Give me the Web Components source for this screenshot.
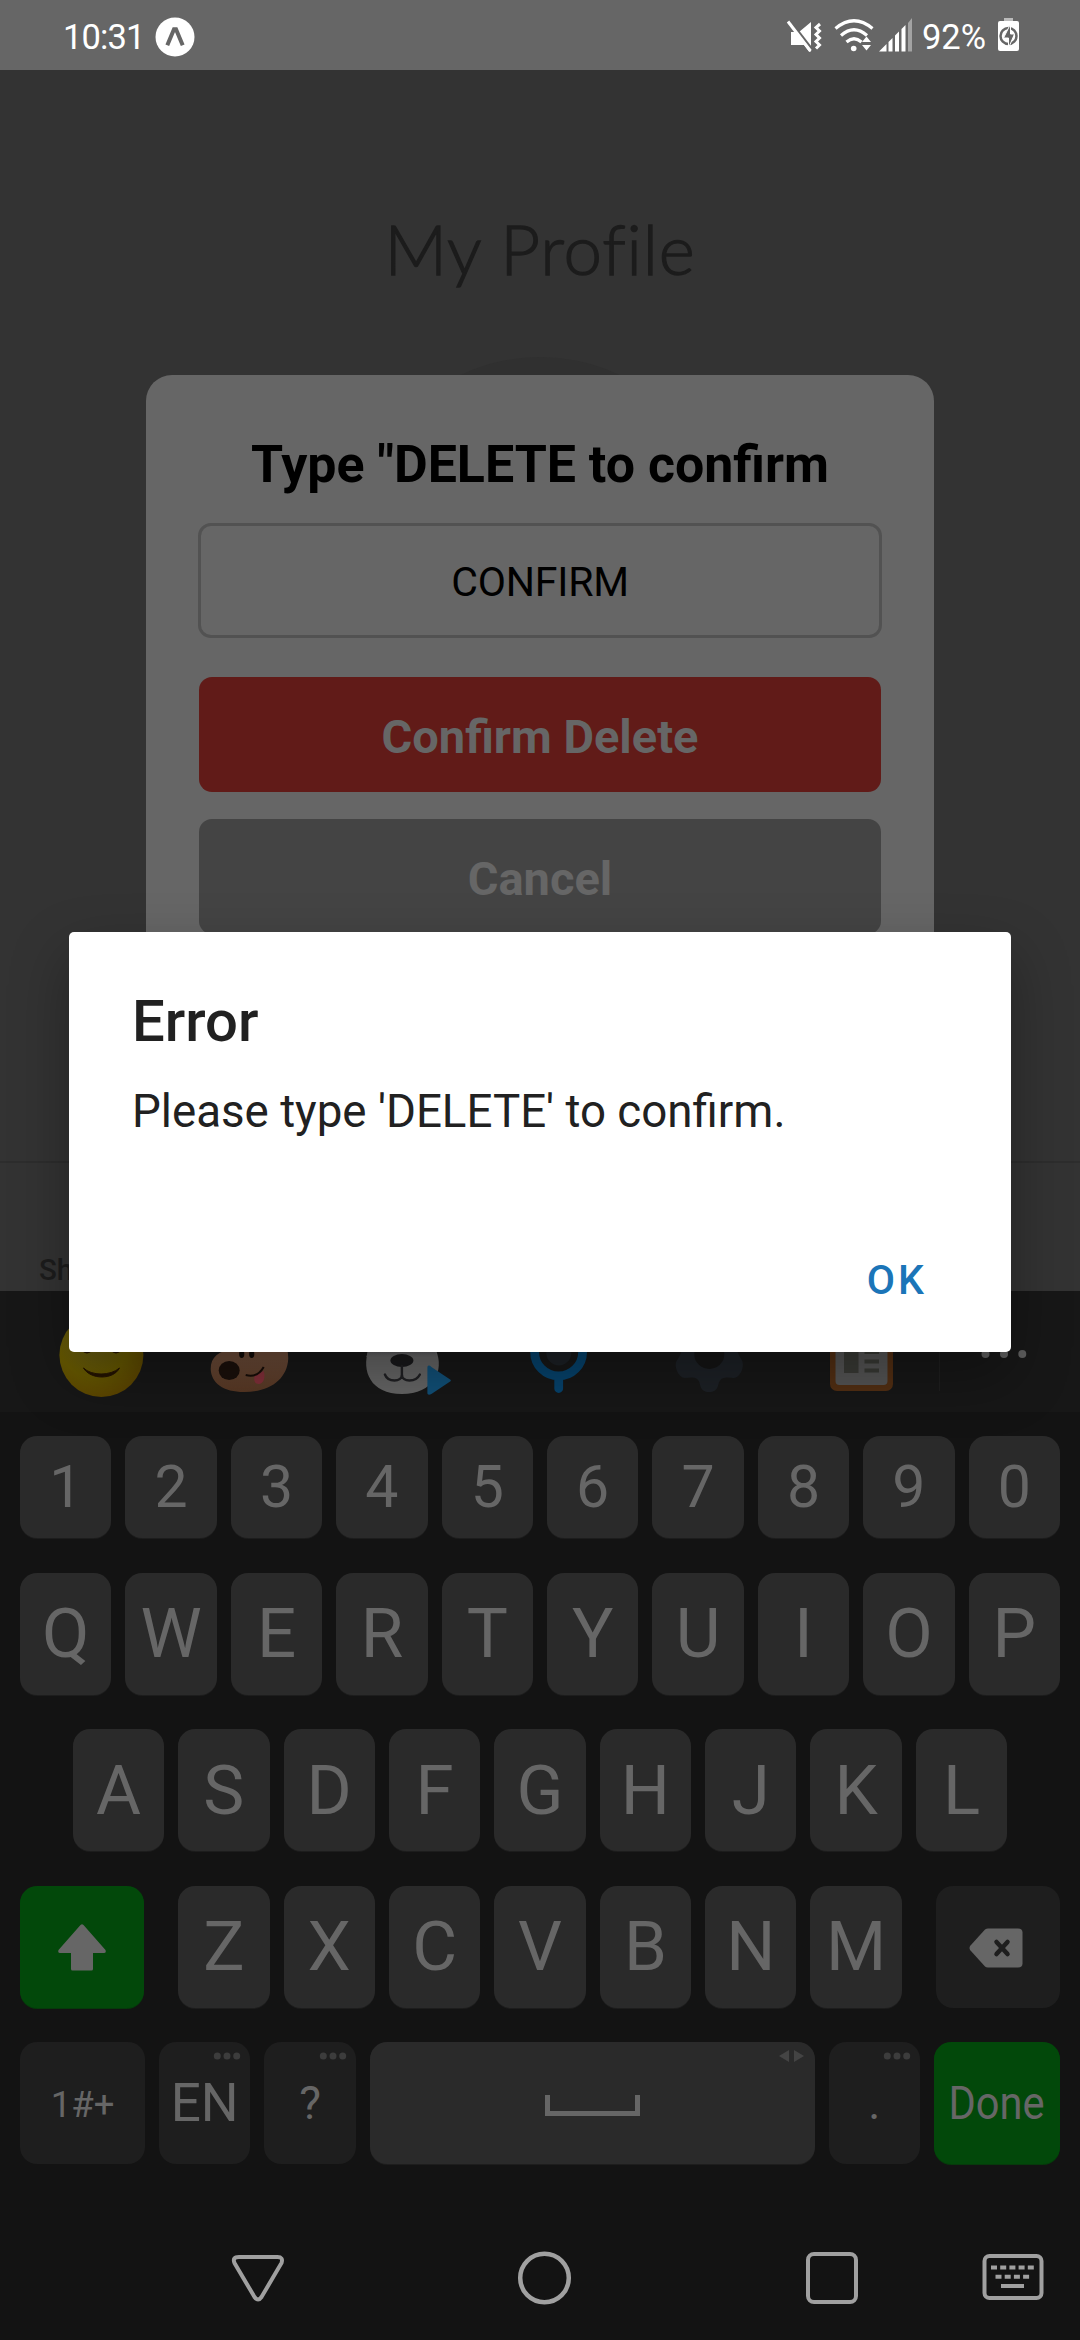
<!DOCTYPE html>
<html lang="en">
<head>
<meta charset="utf-8">
<title>My Profile</title>
<style>
  html, body { margin: 0; background: #131313; }
  body { font-family: Roboto, "Liberation Sans", sans-serif; width: 1080px; height: 2340px; overflow: hidden; }
</style>
</head>
<body>
<phone-screen></phone-screen>
<script>
const define = (name, html, render) => customElements.define(name, class extends HTMLElement {
  constructor() {
    super();
    const root = this.attachShadow({ mode: "open" });
    root.innerHTML = html;
    if (render) render.call(this, root);
  }
});

define("status-bar", `
<style>
  :host { display: flex; box-sizing: border-box; height: 70px; flex: none; background: #666; color: #fff; padding: 3px 60px 0 63px; align-items: center; justify-content: space-between; font-size: 34.5px; }
  div { display: flex; align-items: center; }
  svg { display: block; }
  .time { letter-spacing: -.9px; }
  .app { margin-left: 11px; }
</style>
<div><span class="time">10:31</span>
  <svg class="app" width="40" height="40" viewBox="0 0 40 40"><circle cx="20" cy="20" r="19.5" fill="#fff"/><path d="M12.3 28.3 19 12.2h2L27.700 28.300" fill="none" stroke="#666" stroke-width="4"/></svg>
</div>
<div>
  <svg width="136" height="40" viewBox="0 0 136 40" fill="#fff">
    <path d="M5 15h8L25 5v29.500h-2L18 28H5z"/><path d="M5 5 27 33.500" stroke="#666" stroke-width="2.600"/><path d="M2 4.500 24.500 34" stroke="#fff" stroke-width="3"/>
    <path d="m34 7-4 3.500 3.500 3.500-3.500 3.500 3.500 3.500-3.500 3.500 3.500 3.500-3.500 3.500" fill="none" stroke="#fff" stroke-width="3"/>
    <g fill="none" stroke="#fff" stroke-width="3.200"><path d="M49.500 11.500Q68-4 86.500 11.500"/><path d="M55 18.500Q68 7 81 18.500"/><path d="M60.500 25Q68 18.500 75.500 25"/></g>
    <circle cx="67.700" cy="31.500" r="2.800"/><path d="m76 25 4.500-5.500L85 25zM76 28h9l-4.500 5.500z"/>
    <path d="M93 34.500 100.500 27v7.500zM102.500 25l4-4v13.500h-4zM109 18.500l4-4v20h-4zM115.500 12l4-4v26.500h-4z"/><path d="m122 6 4-5v33.500h-4z" opacity=".4"/>
  </svg>
  <span>92%</span>
  <svg style="margin-left:11px" width="23" height="40" viewBox="0 0 23 40"><path d="M7 1h9v3H7z" fill="#bbb"/><rect x="1" y="4" width="21" height="30" rx="2" fill="#fff"/><circle cx="11.500" cy="19" r="8" fill="none" stroke="#666" stroke-width="2.500"/><path d="M13.500 7v10h4l-6 14V21h-5z" fill="#666" stroke="#fff" stroke-width="1"/></svg>
</div>`);

define("form-button", `
<style>
  :host { display: flex; box-sizing: border-box; height: 115px; border-radius: 13px; align-items: center; justify-content: center; background: var(--fill); color: #666; font-size: 47px; font-weight: 700; padding-top: 3px; }
</style><slot></slot>`);

define("confirm-card", `
<style>
  :host { display: flex; flex-direction: column; box-sizing: border-box; width: 788px; height: 611px; background: #666; border-radius: 26px; padding: 59px 53px 0; }
  h2 { margin: 0 0 28px; font-size: 51.900px; line-height: 61px; font-weight: 700; text-align: center; color: #000; white-space: nowrap; }
  .field { box-sizing: border-box; height: 115px; margin: 0 -1px; border: 3px solid #525252; border-radius: 13px; display: flex; align-items: center; justify-content: center; font-size: 41px; padding-top: 2px; letter-spacing: -.2px; color: #000; margin-bottom: 39px; }
  form-button + form-button { margin-top: 27px; }
</style>
<h2>Type "DELETE to confirm</h2>
<div class="field">CONFIRM</div>
<form-button style="--fill:#611b18">Confirm Delete</form-button>
<form-button style="--fill:#444">Cancel</form-button>`);

define("profile-page", `
<style>
  :host { display: flex; flex-direction: column; height: 1221px; flex: none; background: #333; overflow: hidden; position: relative; }
  h1 { margin: 134px 0 0; text-align: center; font: 300 69px/90px Lato, "Open Sans", sans-serif; letter-spacing: .8px; color: #1c1c1c; -webkit-text-stroke: 1.300px #1c1c1c; }
  .avatar { width: 368px; height: 368px; border-radius: 50%; background: #303030; margin: 63px auto 0; flex: none; }
  .tabs { margin-top: auto; height: 130px; flex: none; box-sizing: border-box; border-top: 2px solid #2d2d2d; padding: 89px 0 0 39px; font-size: 29.500px; font-weight: 500; line-height: 36px; color: #1c1c1c; }
  confirm-card { position: absolute; left: 146px; top: 305px; }
</style>
<h1>My Profile</h1>
<div class="avatar"></div>
<div class="tabs">Sh</div>
<confirm-card></confirm-card>`);

define("error-dialog", `
<style>
  :host { display: flex; flex-direction: column; box-sizing: border-box; width: 942px; height: 420px; background: #fff; border-radius: 5px; padding: 53px 87px 0 63px; box-shadow: 0 24px 60px rgba(0,0,0,.32); color: #212121; }
  h3 { margin: 0; font-size: 58px; line-height: 72px; font-weight: 500; }
  p { margin: 27px 0 0; font-size: 45.700px; line-height: 56px; white-space: nowrap; }
  button { align-self: flex-end; margin: 112px 0 0; padding: 0; border: 0; background: none; font: 500 41px/56px Roboto, sans-serif; letter-spacing: 3px; margin-right: -3px; color: #1b75b8; }
</style>
<h3>Error</h3>
<p>Please type 'DELETE' to confirm.</p>
<button>OK</button>`);

define("keyboard-toolbar", `
<style>
  :host { display: flex; height: 121px; flex: none; background: #171717; padding-left: 25px; }
  svg { display: block; width: 152.300px; height: 121px; flex: none; overflow: visible; }
  .more { width: 141px; border-left: 1px solid #1f1f1f; height: 100px; }
</style>
<svg viewBox="25 1291 152.300 121"><defs><radialGradient id="y" cx=".4" cy=".3" r=".75"><stop offset="0" stop-color="#635a18"/><stop offset=".6" stop-color="#665800"/><stop offset="1" stop-color="#5b4300"/></radialGradient></defs>
  <circle cx="101.400" cy="1355" r="42" fill="url(#y)"/><path d="M83.500 1368c8 8 27 8 36 0-6 12-29 12-36 0z" fill="#241300" stroke="#241300"/><path d="M83 1350q4 4 8 0M112 1350q4 4 8 0" stroke="#241300" stroke-width="3" fill="none"/></svg>
<svg viewBox="177.300 1291 152.300 121"><defs><linearGradient id="p" x2="0" y2="1"><stop offset=".5" stop-color="#6b4b38"/><stop offset="1" stop-color="#583824"/></linearGradient></defs>
  <path d="M211 1369c0-12 8-18 22-20l38-24c11 6 18 21 17.500 34-1 20-18 33-44 33-21 0-33-9-33.500-23z" fill="url(#p)"/><ellipse cx="229.500" cy="1370.500" rx="10.500" ry="9.500" fill="#1b100b"/><ellipse cx="242" cy="1354" rx="2.600" ry="4" fill="#110b08"/><ellipse cx="252" cy="1354" rx="2.600" ry="4" fill="#110b08"/><path d="M255 1375l9-4c2 6 0 13-5 13s-5-5-4-9z" fill="#83303a"/><path d="M246 1375q12 3 18-8" stroke="#170d08" stroke-width="2" fill="none"/></svg>
<svg viewBox="329.600 1291 152.300 121"><defs><linearGradient id="d" x2="0" y2="1"><stop offset=".6" stop-color="#5b5b5d"/><stop offset="1" stop-color="#666"/></linearGradient></defs>
  <path d="M368 1350c-7 21 2 44 33.500 44s43-23 34-44c-5-33-60-33-67.500 0z" fill="#666"/><path d="M369 1345h65l2 12h-70z" fill="url(#d)"/><ellipse cx="401.500" cy="1360.500" rx="11.500" ry="6.500" fill="#19191b"/><path d="M401.500 1366v8.500c0 8-14 8-17 0M401.500 1374.500c0 8 14 8 18 0" fill="none" stroke="#202023" stroke-width="2.400" stroke-linecap="round"/><path d="M427 1368c0-3 2-3 4-1l18 12c2 1 2 2 0 3l-18 12c-2 1-4 1-4-1z" fill="#115078"/></svg>
<svg viewBox="481.900 1291 152.300 121"><circle cx="558.700" cy="1353" r="12.500" fill="#1d2126"/><path d="M534.500 1352a24 24 0 0 0 48 0V1345M534.500 1352v-7M558.600 1378v10.500" fill="none" stroke="#06436d" stroke-width="8.800" stroke-linecap="round"/></svg>
<svg viewBox="634.200 1291 152.300 121"><path d="M681 1343c3 11-3 14-5 20-1 5 3 15 9 15 6 0 11-2 14 3 2 4 1 11 10.500 11s8-7 10.500-11c3-5 9-3 14-3 6 0 10-10 9-15-1-6-8-9-5-20z" fill="#1d2126"/><circle cx="709.500" cy="1354" r="15" fill="#151515"/></svg>
<svg viewBox="786.500 1291 152.300 121"><rect x="830.500" y="1310" width="63" height="81" rx="7" fill="#532f13"/><rect x="836" y="1325" width="52" height="60" rx="4" fill="#555"/><path d="M844.500 1342h14.500v31h-14.500z" fill="#3a3b36"/><path d="M865 1352h14.500M865 1361.500h14.500M865 1370.500h14.500" stroke="#393a35" stroke-width="4"/></svg>
<svg class="more" viewBox="939 1291 141 100"><g fill="#5e5e5e"><circle cx="984.500" cy="1354" r="4"/><circle cx="1003" cy="1354" r="4"/><circle cx="1021.300" cy="1354" r="4"/></g></svg>`);

define("key-cap", `
<style>
  :host { display: flex; position: relative; box-sizing: border-box; flex: 0 0 91.400px; border-radius: 17px; align-items: center; justify-content: center; background: #2a2a2a; color: #666; box-shadow: 0 1px 0 #1d1d1d; }
  :host([dark]) { background: #1e1e1e; box-shadow: none; }
  :host([green]) { background: #02480a; box-shadow: 0 1px 0 #063a0b; }
  .hint { position: absolute; right: 9px; top: 10px; display: none; }
  :host([hint]) .hint { display: block; }
</style>
<slot></slot><svg class="hint" width="28" height="8" viewBox="0 0 28 8" fill="#3c3c3c"><circle cx="4.300" cy="4" r="3.500"/><circle cx="14" cy="4" r="3.500"/><circle cx="23.700" cy="4" r="3.500"/></svg>`);

define("key-row", `
<style>
  :host { display: flex; gap: 14px; justify-content: center; height: 122px; font-size: 69px; }
  :host([digits]) { height: 102px; font-size: 59px; }
  :host([digits]) key-cap { padding-bottom: 2px; }
</style><slot></slot>`, function (root) {
  const keys = this.getAttribute("keys");
  if (keys) root.querySelector("slot").innerHTML = [...keys].map(k => `<key-cap>${k}</key-cap>`).join("");
});

define("key-board", `
<style>
  :host { display: flex; flex-direction: column; gap: 34.500px; flex: none; height: 754px; padding: 24px 20px 0; box-sizing: border-box; background: #131313; }
  svg { display: block; }
  .cursor { position: absolute; right: 10px; top: 7px; }
  .done { display: block; transform: scaleX(.915); }
</style>
<key-row digits keys="1234567890"></key-row>
<key-row keys="QWERTYUIOP"></key-row>
<key-row keys="ASDFGHJKL"></key-row>
<key-row>
  <key-cap green style="flex-basis:124px;margin-right:20px"><svg width="50" height="48" viewBox="0 0 50 48" fill="#666"><path d="M23.500 2q1.500-1.500 3 0L48.500 27q1 3-1.500 3H36v16q0 1.500-1.500 1.500h-19Q14 47.500 14 46V30H3q-2.500 0-1.500-3z"/></svg></key-cap>
  <key-cap>Z</key-cap><key-cap>X</key-cap><key-cap>C</key-cap><key-cap>V</key-cap><key-cap>B</key-cap><key-cap>N</key-cap><key-cap>M</key-cap>
  <key-cap dark style="flex-basis:124px;margin-left:20px"><svg style="margin:3px 0 0 -3px" width="54" height="40" viewBox="0 0 54 40"><path d="M16 1.500q1.500-1 3-1h30q4.500 0 4.500 4v31q0 4-4.500 4H19q-2 0-3-1L1.500 22.500q-2-2.500 0-5z" fill="#666"/><path d="m27.500 14 11 12m0-12-11 12" stroke="#1e1e1e" stroke-width="4.500" stroke-linecap="round"/></svg></key-cap>
</key-row>
<key-row>
  <key-cap dark style="flex-basis:125px;font-size:36.500px;padding-top:2px">1#+</key-cap>
  <key-cap dark hint style="font-size:53px">EN</key-cap>
  <key-cap dark hint style="font-size:46px">?</key-cap>
  <key-cap style="flex:1"><svg style="margin-top:4px" width="95" height="21" viewBox="0 0 95 21"><path d="M2.500 0v18.500h90V0" fill="none" stroke="#666" stroke-width="5"/></svg><svg class="cursor" width="27" height="14" viewBox="0 0 27 14" fill="#444"><path d="M11 1v12L1 7zM16 1v12l10-6z"/></svg></key-cap>
  <key-cap dark hint style="font-size:46px">.</key-cap>
  <key-cap green style="flex-basis:126px;font-size:45.500px"><span class="done">Done</span></key-cap>
</key-row>`);

define("nav-bar", `
<style>
  :host { display: flex; flex: 1; background: #131313; padding: 84px 35px 0 230px; justify-content: flex-start; }
  svg { display: block; flex: none; fill: none; stroke: #a0a0a0; stroke-width: 4; }
</style>
<svg style="margin-right:230px" width="56" height="56" viewBox="0 0 56 56"><path d="M9 7h38.500q6 0 4 6L31.500 47q-3.500 5-7 0L4.500 13Q2 7 9 7z"/></svg>
<svg style="margin-right:232px" width="56" height="56" viewBox="0 0 56 56"><circle cx="28.500" cy="28" r="24.300" stroke-width="4.500"/></svg>
<svg style="margin-right:120px" width="56" height="56" viewBox="0 0 56 56"><rect x="4" y="4" width="48" height="48" rx="6"/></svg>
<svg width="64" height="56" viewBox="0 0 64 56"><rect x="4.500" y="6" width="57" height="42" rx="5"/><path d="M11 17.500h43" stroke-dasharray="6 3.200"/><path d="M15.500 26.700h34" stroke-dasharray="6 3.200"/><path d="M21 36h23"/></svg>`);

define("phone-screen", `
<style>
  :host { display: flex; flex-direction: column; position: relative; width: 1080px; height: 2340px; overflow: hidden; }
  error-dialog { position: absolute; left: 69px; top: 932px; }
</style>
<status-bar></status-bar>
<profile-page></profile-page>
<keyboard-toolbar></keyboard-toolbar>
<key-board></key-board>
<nav-bar></nav-bar>
<error-dialog></error-dialog>`);
</script>
</body>
</html>
